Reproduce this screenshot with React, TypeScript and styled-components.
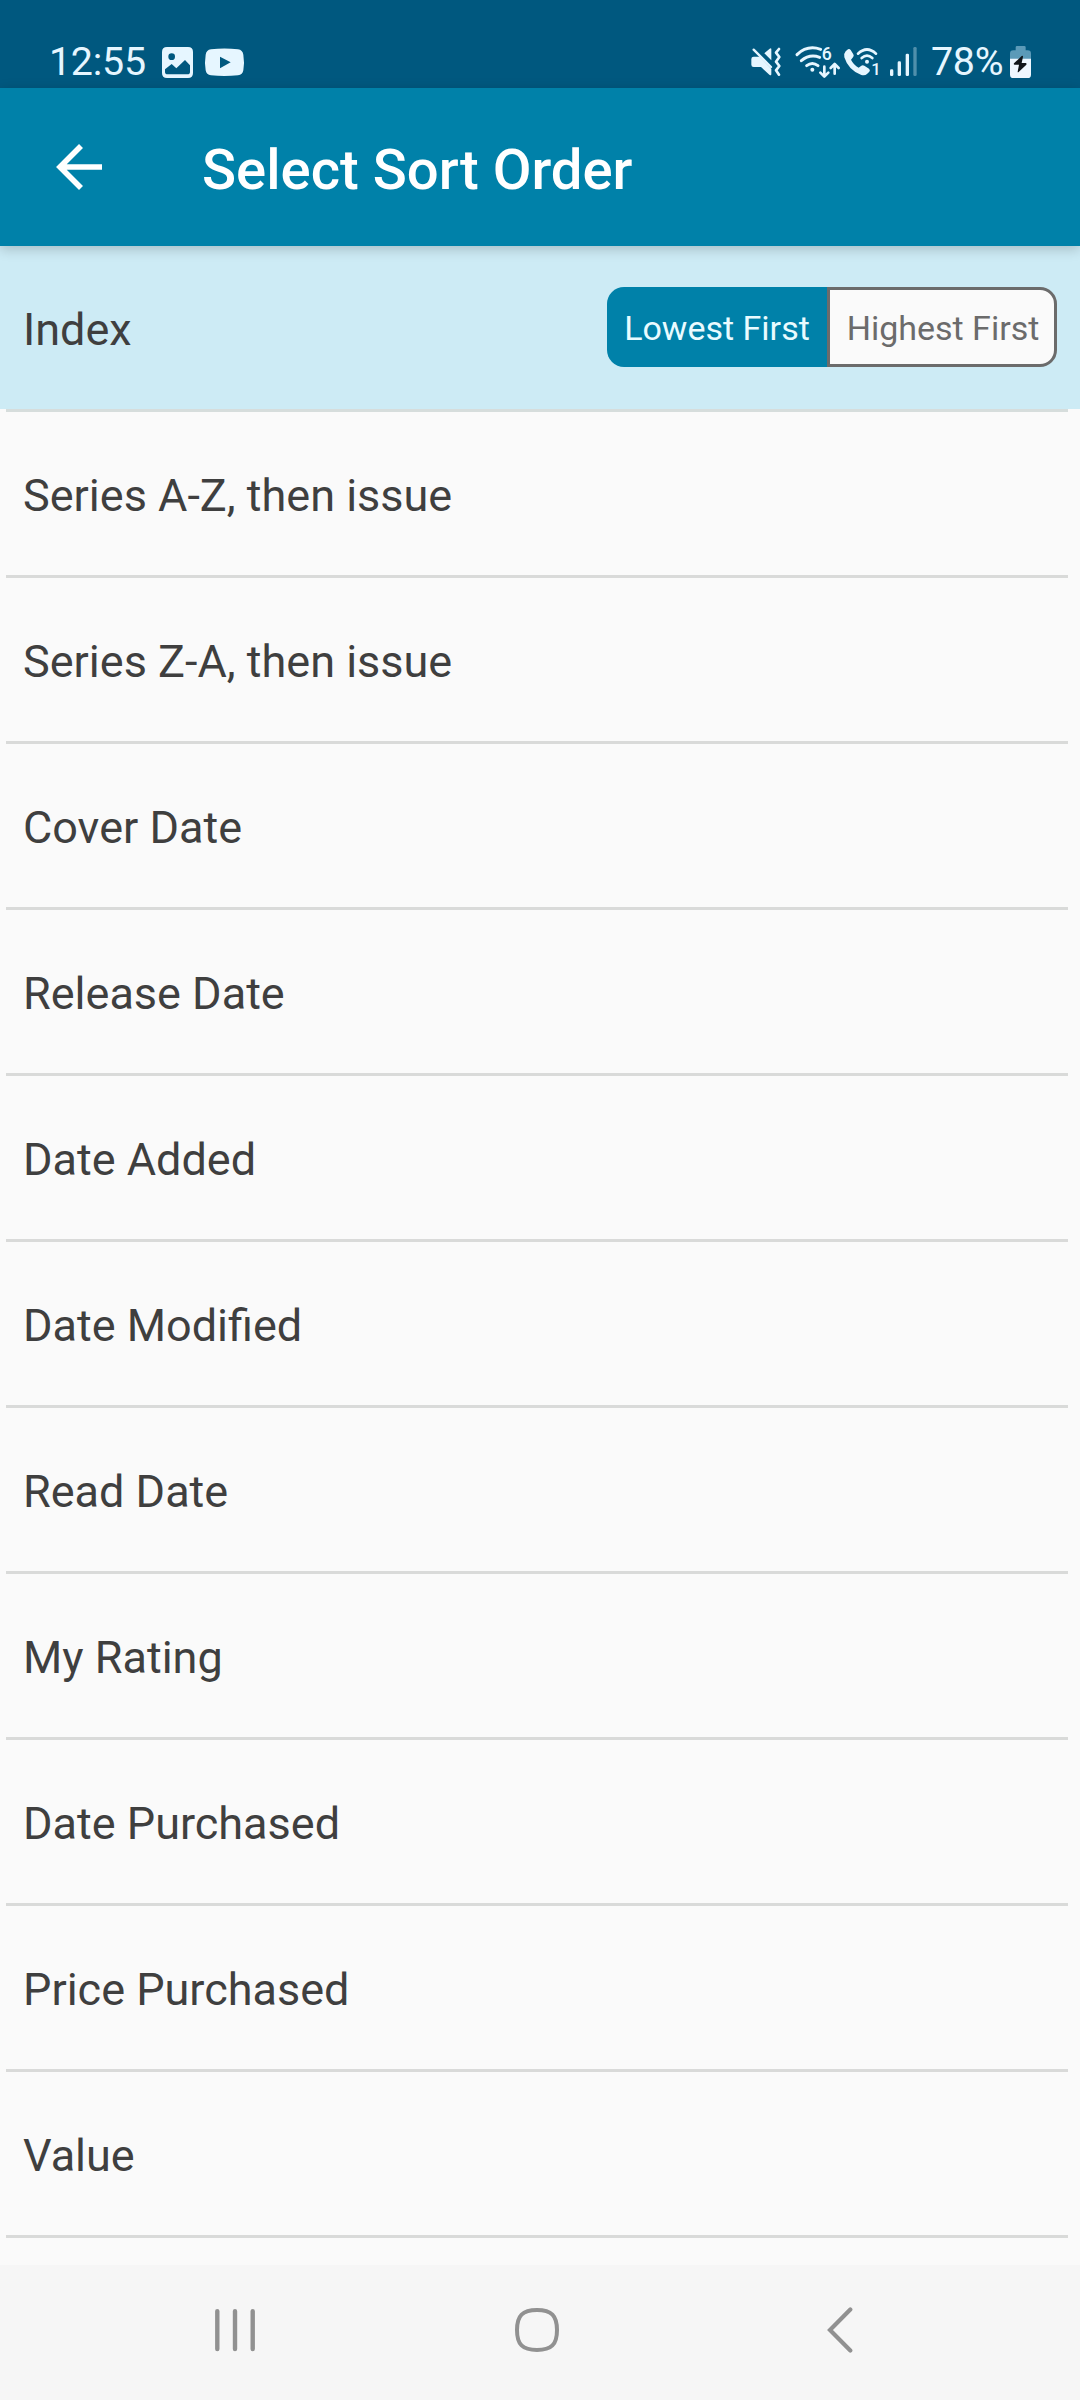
import React from 'react';
import styled, { createGlobalStyle } from 'styled-components';

const GlobalStyle = createGlobalStyle`
  *, *::before, *::after { box-sizing: border-box; }
  html, body { margin: 0; padding: 0; background: #fafafa; }
  body { font-family: Roboto, "Noto Sans", sans-serif; }
  svg { display: block; flex: none; }
`;

const Screen = styled.div`
  display: flex;
  flex-direction: column;
  width: 1080px;
  height: 2400px;
  overflow: hidden;
  background: #fafafa;
`;

const StatusBar = styled.header`
  display: flex;
  flex: none;
  justify-content: space-between;
  height: 88px;
  padding: 46px 49px 0 49px;
  background: #00587f;
  color: #e6f6ff;
`;

const StatusGroup = styled.div`
  display: flex;
  align-items: flex-start;
  height: 32px;
`;

const StatusText = styled.span<{ $width: number; $gap?: number }>`
  flex: none;
  width: ${({ $width }) => $width}px;
  margin-left: ${({ $gap = 0 }) => $gap}px;
  font-size: 39.375px;
  letter-spacing: -0.25px;
  line-height: 32px;
  white-space: nowrap;
`;

const StatusIcon = styled.svg<{ $gap?: number }>`
  margin-left: ${({ $gap = 0 }) => $gap}px;
  overflow: visible;
  font-family: Roboto, sans-serif;
`;

const AppBar = styled.div`
  display: flex;
  flex: none;
  align-items: center;
  position: relative;
  z-index: 1;
  height: 158px;
  padding-left: 56px;
  background: #0081a9;
  color: #fff;
  box-shadow: 0 3px 12px rgba(0, 0, 0, 0.2);
`;

const BackButton = styled.button`
  display: flex;
  padding: 0;
  border: 0;
  background: none;
  color: inherit;
`;

const Title = styled.h1`
  margin: 0 0 0 99px;
  padding-top: 5px;
  font-size: 56.25px;
  font-weight: 500;
  line-height: 66px;
`;

const List = styled.ul`
  flex: 1;
  min-height: 0;
  margin: 0;
  padding: 0;
  list-style: none;
  overflow: hidden;
`;

const Row = styled.li<{ $selected?: boolean }>`
  display: flex;
  align-items: center;
  justify-content: space-between;
  height: 163px;
  padding: 0 23px;
  background: ${({ $selected }) => ($selected ? '#cdebf5' : 'transparent')};
`;

const RowLabel = styled.span`
  padding-top: 4px;
  color: #3f3f3f;
  font-size: 45px;
  line-height: 53px;
`;

const Divider = styled.li<{ $tinted?: boolean }>`
  height: 3px;
  margin: 0 12px 0 6px;
  background: ${({ $tinted }) => ($tinted ? '#d6dddc' : '#d9dad9')};
`;

const Segmented = styled.div`
  display: flex;
  height: 80px;
  margin-bottom: 1px;
`;

const Segment = styled.button<{ $active?: boolean }>`
  display: flex;
  align-items: center;
  justify-content: center;
  width: ${({ $active }) => ($active ? 220 : 230)}px;
  padding: ${({ $active }) => ($active ? '2px 0 0' : '2px 0 0 2px')};
  border: ${({ $active }) => ($active ? '0' : '3px solid #6b6b6b')};
  border-radius: ${({ $active }) => ($active ? '17px 0 0 17px' : '0 17px 17px 0')};
  background: ${({ $active }) => ($active ? '#0081a9' : '#fafafa')};
  color: ${({ $active }) => ($active ? '#e9fbff' : '#6b6b6b')};
  font-family: inherit;
  font-size: 34px;
  white-space: nowrap;
`;

const NavBar = styled.nav`
  display: flex;
  flex: none;
  height: 135px;
  padding: 0 0 5px 84px;
  background: #f6f6f6;
`;

const NavButton = styled.button`
  display: flex;
  align-items: center;
  justify-content: center;
  width: 302px;
  padding: 0;
  border: 0;
  background: none;
  color: #919191;

  &:last-child {
    padding-left: 2px;
  }
`;

const ImageIcon = () => (
  <StatusIcon $gap={14} width="31" height="32" viewBox="0 -3 93 96">
    <path
      fill="currentColor"
      fillRule="evenodd"
      d="M15 0H78Q93 0 93 15V78Q93 93 78 93H15Q0 93 0 78V15Q0 0 15 0ZM29 19A10 10 0 1 0 29 39A10 10 0 1 0 29 19ZM9 67V75Q9 82 17 82H76Q84 82 84 75V55L69 39L43 64L29 51Z"
    />
  </StatusIcon>
);

const VideoIcon = () => (
  <StatusIcon $gap={12} width="39" height="32" viewBox="0 -8 117 96">
    <path
      fill="currentColor"
      fillRule="evenodd"
      d="M18 2Q58 -3 99 2Q113 4 115 18Q119 41 115 65Q113 78 99 80Q58 84 18 80Q4 78 2 65Q-2 41 2 18Q4 4 18 2ZM45 24V59L77 41Z"
    />
  </StatusIcon>
);

const MuteIcon = () => (
  <StatusIcon width="32" height="32" viewBox="60 48 96 96">
    <path fill="currentColor" d="M103 70L119 56Q124 52 124 58V91ZM71 80H88L124 116V132Q124 139 118 134L93 111H71Q64 111 64 104V87Q64 80 71 80Z" />
    <path stroke="currentColor" strokeWidth="7" strokeLinecap="round" d="M71 59L123 111" />
    <path fill="none" stroke="currentColor" strokeWidth="8" strokeLinecap="round" strokeLinejoin="round" d="M147 57L138 68L148 81L138 95L148 108L138 121L147 134" />
  </StatusIcon>
);

const WifiIcon = () => (
  <StatusIcon $gap={13} width="45" height="33" viewBox="195 48 135 99">
    <g fill="none" stroke="currentColor" strokeWidth="9" strokeLinecap="round">
      <path d="M201 74Q232 44 272 58" />
      <path d="M214 92Q239 71 269 82" />
      <path d="M230 107Q247 94 264 107" />
    </g>
    <circle cx="247" cy="119" r="6" fill="currentColor" />
    <text x="275" y="91" fontSize="53" fontWeight="500" fill="currentColor">6</text>
    <g fill="none" stroke="currentColor" strokeWidth="8" strokeLinecap="round" strokeLinejoin="round">
      <path d="M283 110V139M271 128L283 140L295 128" />
      <path d="M314 131V103M302 114L314 102L326 114" />
    </g>
  </StatusIcon>
);

const CallIcon = () => (
  <StatusIcon $gap={4} width="36" height="32" viewBox="342 48 108 96">
    <path
      fill="currentColor"
      d="M347 64L354 58Q358 55 362 60L370 73Q373 78 369 82L363 89Q371 105 386 113L394 107Q398 104 403 107L417 116Q422 120 418 125L411 132Q405 138 394 135Q355 121 343 82Q341 70 347 64Z"
    />
    <g fill="none" stroke="currentColor" strokeWidth="8" strokeLinecap="round">
      <path d="M384 71Q411 46 438 71" />
      <path d="M395 84Q411 70 427 84" />
    </g>
    <circle cx="411" cy="95" r="6" fill="currentColor" />
    <text x="424" y="136" fontSize="50" fontWeight="500" fill="currentColor">1</text>
  </StatusIcon>
);

const SignalIcon = () => (
  <StatusIcon $gap={10} width="27" height="32" viewBox="30 48 81 96">
    <g fill="currentColor">
      <rect x="30" y="118" width="10" height="20" rx="4" />
      <rect x="53" y="94" width="10" height="44" rx="4" />
      <rect x="77" y="71" width="10" height="67" rx="4" />
      <rect x="100" y="51" width="10" height="87" rx="4" opacity="0.35" />
    </g>
  </StatusIcon>
);

const BatteryIcon = () => (
  <StatusIcon width="21" height="32" viewBox="390 48 63 96">
    <path fill="#5b9ab8" d="M411 48H433Q437 48 437 52V61H443Q453 61 453 71V88H390V71Q390 61 400 61H407V52Q407 48 411 48Z" />
    <path fill="#eef7ff" d="M390 86H453V134Q453 144 443 144H400Q390 144 390 134Z" />
    <path fill="#10151a" d="M425 78L402 100Q400 103 404 104H417L413 125Q413 128 416 126L439 104Q441 100 437 99H425L429 80Q429 76 425 78Z" />
  </StatusIcon>
);

const ArrowBackIcon = () => (
  <svg width="47" height="46" viewBox="0 0 47 46" fill="none" stroke="currentColor" strokeWidth="5.6">
    <path d="M25 2L4 23L25 44M3 23H46" />
  </svg>
);

const RecentsIcon = () => (
  <svg width="42" height="44" viewBox="0 0 42 44" stroke="currentColor" strokeWidth="4.4" strokeLinecap="round">
    <path d="M3.3 3.2V41M21 3.2V41M38.7 3.2V41" />
  </svg>
);

const HomeIcon = () => (
  <svg width="44" height="44" viewBox="0 0 44 44" fill="none" stroke="currentColor" strokeWidth="4">
    <path d="M22 2C36.500 2 42 7.500 42 22S36.500 42 22 42S2 36.500 2 22S7.500 2 22 2Z" />
  </svg>
);

const NavBackIcon = () => (
  <svg width="26" height="46" viewBox="0 0 26 46" fill="none" stroke="currentColor" strokeWidth="4.2" strokeLinecap="round">
    <path d="M23.300 2.500L3 23L23.300 43.500" />
  </svg>
);

const sortFields = [
  'Series A-Z, then issue',
  'Series Z-A, then issue',
  'Cover Date',
  'Release Date',
  'Date Added',
  'Date Modified',
  'Read Date',
  'My Rating',
  'Date Purchased',
  'Price Purchased',
  'Value',
];

export default function App() {
  return (
    <Screen>
      <GlobalStyle />
      <StatusBar>
        <StatusGroup>
          <StatusText $width={99}>12:55</StatusText>
          <ImageIcon />
          <VideoIcon />
        </StatusGroup>
        <StatusGroup>
          <MuteIcon />
          <WifiIcon />
          <CallIcon />
          <SignalIcon />
          <StatusText $width={79} $gap={14}>78%</StatusText>
          <BatteryIcon />
        </StatusGroup>
      </StatusBar>
      <AppBar>
        <BackButton aria-label="Back">
          <ArrowBackIcon />
        </BackButton>
        <Title>Select Sort Order</Title>
      </AppBar>
      <List>
        <Row $selected>
          <RowLabel>Index</RowLabel>
          <Segmented>
            <Segment $active>Lowest First</Segment>
            <Segment>Highest First</Segment>
          </Segmented>
        </Row>
        <Divider $tinted />
        {sortFields.map((field) => (
          <React.Fragment key={field}>
            <Row>
              <RowLabel>{field}</RowLabel>
            </Row>
            <Divider />
          </React.Fragment>
        ))}
      </List>
      <NavBar>
        <NavButton aria-label="Recent apps">
          <RecentsIcon />
        </NavButton>
        <NavButton aria-label="Home">
          <HomeIcon />
        </NavButton>
        <NavButton aria-label="Back">
          <NavBackIcon />
        </NavButton>
      </NavBar>
    </Screen>
  );
}
